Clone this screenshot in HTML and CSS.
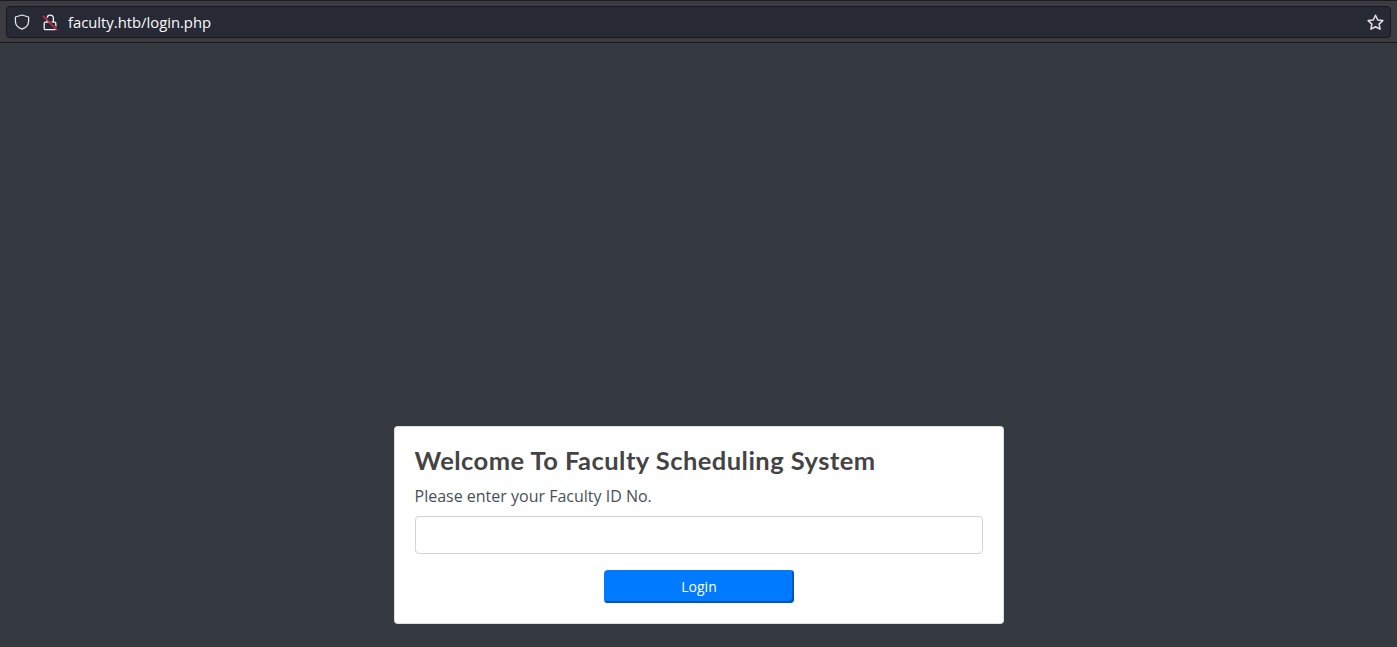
FILE: index.html
```html
<!DOCTYPE html>
<html lang="en">
<head>
    <meta charset="UTF-8">
    <meta name="viewport" content="width=device-width, initial-scale=1.0">
    <title>Faculty Scheduling System</title>
    <link rel="stylesheet" href="styles.css">
</head>
<body>
    <!-- browser toolbar -->
    <header class="toolbar">
        <div class="urlbar">
            <svg class="icon shield" width="16" height="16" viewBox="0 0 16 16" fill="none" stroke="#e4e4e7" stroke-width="1.3">
                <path d="M8 1 L14.6 3 V7.2 C14.6 11 11.8 13.8 8 15.2 C4.2 13.8 1.4 11 1.4 7.2 V3 Z" stroke-linejoin="round"/>
            </svg>
            <svg class="icon lock" width="16" height="17" viewBox="0 0 16 17" fill="none">
                <path d="M5 8 V4.6 C5 2.6 6.4 1.2 8.2 1.2 C10 1.2 11.4 2.6 11.4 4.6 V8" stroke="#f4f4f5" stroke-width="1.3"/>
                <rect x="2.2" y="8.2" width="11.6" height="7.4" rx="1.2" stroke="#f4f4f5" stroke-width="1.3"/>
                <path d="M0.8 0.4 L15.2 14.8" stroke="#272935" stroke-width="1.4"/>
                <path d="M0.8 1.8 L15.2 16.2" stroke="#e22850" stroke-width="1.5"/>
            </svg>
            <span class="url">faculty.htb/login.php</span>
            <svg class="icon star" width="17" height="17" viewBox="0 0 16 16" fill="none" stroke="#e4e4e7" stroke-width="1.4">
                <path d="M8 1.2 L10.1 5.6 L14.9 6.2 L11.4 9.5 L12.3 14.3 L8 12 L3.7 14.3 L4.6 9.5 L1.1 6.2 L5.9 5.6 Z" stroke-linejoin="round"/>
            </svg>
        </div>
    </header>

    <main class="page">
        <form class="card">
            <h2>Welcome To Faculty Scheduling System</h2>
            <label for="id_no">Please enter your Faculty ID No.</label>
            <input type="text" id="id_no" class="field">
            <div class="actions">
                <button type="button" class="btn">Login</button>
            </div>
        </form>
    </main>
</body>
</html>
```

FILE: styles.css
```css
* {
    box-sizing: border-box;
}
html, body {
    height: 100%;
}
body {
    margin: 0;
    overflow: hidden;
    background-color: #343a40;
    font-family: "Open Sans", "Liberation Sans", sans-serif;
    display: flex;
    flex-direction: column;
}

/* toolbar */
.toolbar {
    height: 43px;
    flex: none;
    padding: 5px 6px 4px;
    background-color: #3b3b41;
    border-top: 1px solid #1c1b22;
    border-bottom: 1px solid #17171b;
}
.urlbar {
    height: 32px;
    display: flex;
    align-items: center;
    padding: 0 6px 0 7px;
    background-color: #272935;
    border: 1px solid #17171d;
    border-radius: 4px;
}
.icon {
    flex: none;
}
.lock {
    margin-left: 12px;
}
.url {
    margin-left: 10px;
    font-size: 14.8px;
    color: #fbfbfe;
}
.star {
    margin-left: auto;
}

/* login card */
.page {
    flex: 1;
    display: flex;
    justify-content: center;
    padding-top: 383px;
}
.card {
    width: 610px;
    height: 198px;
    padding: 19px 20px;
    background-color: #fff;
    border: 1px solid rgba(0, 0, 0, .125);
    border-radius: 4px;
    color: #495057;
}
.card h2 {
    margin: 0 0 10px;
    font-family: "Lato", "Liberation Sans", sans-serif;
    font-size: 25.5px;
    font-weight: 700;
    line-height: 28px;
    letter-spacing: .46px;
    color: #444;
}
.card label {
    display: block;
    margin-bottom: 8px;
    font-size: 16px;
    line-height: 24px;
}
.field {
    display: block;
    width: 100%;
    height: 38px;
    border: 1px solid #ced4da;
    border-radius: 4px;
    background-color: #fff;
}
.actions {
    display: flex;
    justify-content: center;
    margin-top: 16px;
}
.btn {
    width: 190px;
    height: 33px;
    padding: 0 0 0 1px;
    border: 0;
    box-shadow: inset -2px -2px 0 #0056b3;
    border-radius: 4px;
    background-color: #007bff;
    color: #fff;
    font-family: inherit;
    font-size: 14px;
}
```
